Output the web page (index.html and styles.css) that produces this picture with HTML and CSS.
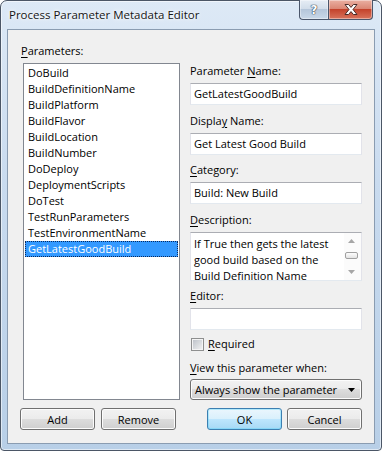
FILE: index.html
```html
<!DOCTYPE html>
<html lang="en">
<head>
    <meta charset="UTF-8">
    <meta name="viewport" content="width=device-width, initial-scale=1.0">
    <title>Process Parameter Metadata Editor</title>
    <link rel="stylesheet" href="styles.css">
</head>
<body>
    <div class="window">
        <div class="titlebar">
            <div class="title">Process Parameter Metadata Editor</div>
            <div class="caption-buttons">
                <div class="cap-btn help"><span class="help-glyph">?</span></div>
                <div class="cap-btn close">
                    <svg width="14" height="11" viewBox="0 0 14 11">
                        <polygon points="1,0.5 4.6,0.5 7,3.4 9.4,0.5 13,0.5 9,5.5 13,10.5 9.4,10.5 7,7.6 4.6,10.5 1,10.5 5,5.5" fill="#fff" stroke="#4a2c28" stroke-width="1" stroke-linejoin="round"/>
                    </svg>
                </div>
            </div>
        </div>
        <div class="client">
            <div class="params-label"><u>P</u>arameters:</div>
            <div class="listbox">
                <div class="item">DoBuild</div>
                <div class="item">BuildDefinitionName</div>
                <div class="item">BuildPlatform</div>
                <div class="item">BuildFlavor</div>
                <div class="item">BuildLocation</div>
                <div class="item">BuildNumber</div>
                <div class="item">DoDeploy</div>
                <div class="item">DeploymentScripts</div>
                <div class="item">DoTest</div>
                <div class="item">TestRunParameters</div>
                <div class="item">TestEnvironmentName</div>
                <div class="item selected">GetLatestGoodBuild</div>
            </div>
            <div class="form">
                <div class="field-label">Parameter <u>N</u>ame:</div>
                <div class="textbox">GetLatestGoodBuild</div>
                <div class="field-label">Displa<u>y</u> Name:</div>
                <div class="textbox">Get Latest Good Build</div>
                <div class="field-label"><u>C</u>ategory:</div>
                <div class="textbox">Build: New Build</div>
                <div class="field-label"><u>D</u>escription:</div>
                <div class="textbox desc">
                    <div class="desc-text">
                        <div class="line">If True then gets the latest</div>
                        <div class="line">good build based on the</div>
                        <div class="line">Build Definition Name</div>
                    </div>
                    <div class="vscroll">
                        <div class="arrow">
                            <svg width="7" height="4" viewBox="0 0 7 4"><polygon points="0,4 3.5,0 7,4" fill="#a6a6a6"/></svg>
                        </div>
                        <div class="track"><div class="thumb"></div></div>
                        <div class="arrow">
                            <svg width="7" height="4" viewBox="0 0 7 4"><polygon points="0,0 7,0 3.5,4" fill="#a6a6a6"/></svg>
                        </div>
                    </div>
                </div>
                <div class="field-label"><u>E</u>ditor:</div>
                <div class="textbox editor"></div>
                <div class="check-row">
                    <span class="checkbox"></span>
                    <span><u>R</u>equired</span>
                </div>
                <div class="field-label view-label"><u>V</u>iew this parameter when:</div>
                <div class="combo">
                    <span>Always show the parameter</span>
                    <svg width="7" height="4" viewBox="0 0 7 4"><polygon points="0,0 7,0 3.5,4" fill="#000"/></svg>
                </div>
            </div>
            <div class="btn-row left-btns">
                <button class="btn">Add</button>
                <button class="btn">Remove</button>
            </div>
            <div class="btn-row right-btns">
                <button class="btn default">OK</button>
                <button class="btn">Cancel</button>
            </div>
        </div>
    </div>
</body>
</html>
```

FILE: styles.css
```css
* {
    box-sizing: border-box;
}
html, body {
    margin: 0;
    padding: 0;
    background: #fff;
}
body {
    font-family: "Open Sans", "Noto Sans", sans-serif;
    font-size: 11px;
    line-height: 16px;
    color: #000;
}
u {
    text-decoration-thickness: 1px;
    text-underline-offset: 2px;
}
.window {
    width: 382px;
    height: 451px;
    border: 1px solid #4b5666;
    border-radius: 7px 7px 4px 4px;
    background: linear-gradient(to bottom, #dde9f6, #c9dbef 40%, #b8cfe7);
    box-shadow: inset 0 0 0 1px rgba(255, 255, 255, 0.55);
    display: flex;
    flex-direction: column;
}
.titlebar {
    height: 28px;
    display: flex;
    padding-left: 8px;
}
.title {
    padding-top: 6px;
    font-size: 11.5px;
    color: #151515;
    text-shadow: 0 0 6px #fff, 0 0 3px #fff;
}
.caption-buttons {
    margin-left: auto;
    margin-right: 8px;
    margin-top: -1px;
    display: flex;
    height: 20px;
}
.cap-btn {
    height: 20px;
    border: 1px solid #4a566b;
    border-top: none;
    display: flex;
    align-items: center;
    justify-content: center;
    box-shadow: inset 0 0 0 1px rgba(255, 255, 255, 0.4);
}
.help {
    width: 29px;
    border-right: none;
    border-radius: 0 0 0 4px;
    background: linear-gradient(#e6edf5, #d0dce9 50%, #b5c6da 50%, #c9d8e8);
}
.help-glyph {
    font-family: "DejaVu Sans", sans-serif;
    font-weight: bold;
    font-size: 12px;
    color: #fff;
    text-shadow: 0 0 1px #2e3a4a, 0 0 1px #2e3a4a, 0 0 1px #2e3a4a;
}
.close {
    width: 45px;
    border-radius: 0 0 4px 0;
    background: linear-gradient(#eab0a2, #d98370 50%, #c4432c 50%, #d8735c);
}
.client {
    flex: 1;
    margin: 0 6px 6px 6px;
    border: 1px solid #8a9cb1;
    background: #f0f0f0;
    display: grid;
    grid-template-columns: 160px 172px;
    grid-template-rows: auto 1fr auto;
    column-gap: 10px;
    padding: 13px 12px 13px 12px;
}
.params-label {
    grid-column: 1;
    grid-row: 1;
    height: 16px;
    margin: 0 0 4px 1px;
}
.listbox {
    grid-column: 1;
    grid-row: 2;
    margin-left: 3px;
    border: 1px solid #828790;
    background: #fff;
    padding: 1px;
    overflow: hidden;
}
.item {
    height: 16px;
    padding-left: 3px;
    white-space: nowrap;
}
.item.selected {
    background: #3399ff;
    color: #fff;
    outline: 1px dotted #0b2a5c;
    outline-offset: -1px;
}
.form {
    grid-column: 2;
    grid-row: 2;
    display: flex;
    flex-direction: column;
}
.field-label {
    height: 16px;
    margin-bottom: 4px;
    white-space: nowrap;
}
.textbox {
    height: 22px;
    border: 1px solid #e2e3ea;
    border-top-color: #abadb3;
    border-bottom-color: #e3e9ef;
    background: #fff;
    padding: 2px 3px;
    margin-bottom: 7.5px;
    white-space: nowrap;
}
.desc {
    height: 49px;
    padding: 0;
    display: flex;
    overflow: hidden;
}
.desc-text {
    flex: 1;
    padding: 3px 3px 0;
}
.vscroll {
    width: 17px;
    display: flex;
    flex-direction: column;
    background: #fbfbfb;
}
.arrow {
    height: 16px;
    display: flex;
    align-items: center;
    justify-content: center;
    padding-right: 2px;
}
.track {
    flex: 1;
    padding: 3px 3px 0 1px;
}
.thumb {
    height: 7px;
    border: 1px solid #a0a0a0;
    border-radius: 2px;
    background: linear-gradient(#fdfdfd, #e4e4e4);
}
.editor {
    margin-bottom: 6px;
}
.check-row {
    height: 16px;
    display: flex;
    align-items: center;
    gap: 4px;
    margin-bottom: 8px;
}
.checkbox {
    width: 13px;
    height: 13px;
    margin-left: 1px;
    border: 1px solid #8e8f8f;
    box-shadow: inset 0 0 0 1px #f4f4f4;
    background: linear-gradient(135deg, #babfc6, #f4f4f4);
}
.view-label {
    margin-bottom: 3px;
}
.combo {
    height: 21px;
    border: 1px solid #707070;
    border-radius: 3px;
    background: linear-gradient(#f2f2f2, #ebebeb 50%, #dddddd 50%, #cfcfcf);
    box-shadow: inset 0 0 0 1px #fcfcfc;
    display: flex;
    align-items: center;
    justify-content: space-between;
    padding: 0 6px 0 4px;
    white-space: nowrap;
}
.btn-row {
    grid-row: 3;
    margin-top: 8px;
    display: flex;
}
.left-btns {
    grid-column: 1;
    gap: 6px;
}
.right-btns {
    grid-column: 2;
    justify-content: flex-end;
    gap: 5px;
}
.btn {
    width: 75px;
    height: 22px;
    padding: 0;
    font-family: "Open Sans", "Noto Sans", sans-serif;
    font-size: 11px;
    color: #000;
    border: 1px solid #707070;
    border-radius: 3px;
    background: linear-gradient(#f2f2f2, #ebebeb 50%, #dddddd 50%, #cfcfcf);
    box-shadow: inset 0 0 0 1px #fcfcfc;
}
.btn.default {
    border-color: #3c7fb1;
    background: linear-gradient(#eaf6fd, #d9f0fc 50%, #bee6fd 50%, #a7d9f5);
    box-shadow: inset 0 0 0 1px #48d2fb55;
}
```
